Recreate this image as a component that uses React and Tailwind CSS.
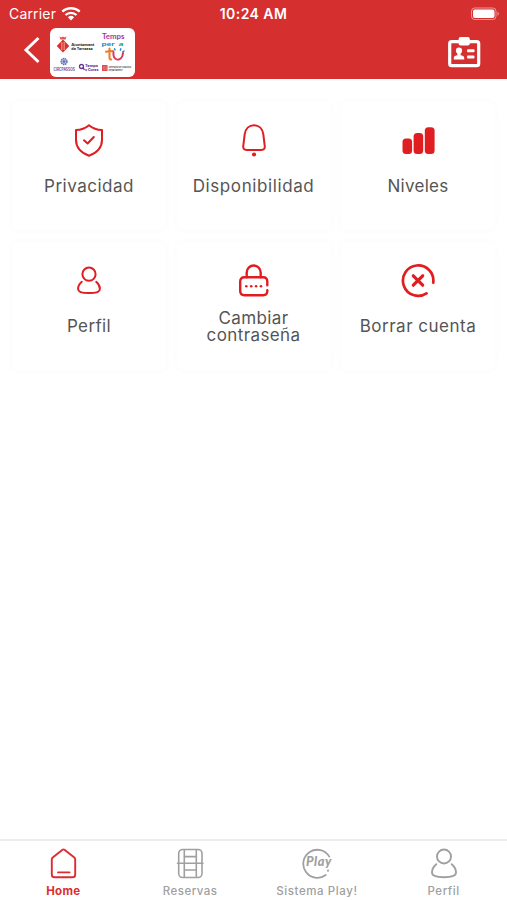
import React from 'react';

const stroke = {
  fill: 'none',
  stroke: 'currentColor',
  strokeWidth: 2,
  strokeLinecap: 'round',
  strokeLinejoin: 'round',
};

const ShieldIcon = () => (
  <svg width="34" height="34" viewBox="0 0 34 34" {...stroke}>
    <path d="M17 1.300c3.600 3.100 8 4.700 13 4.700V15.700c0 7.700-5 13-13 16C9 28.700 4 23.400 4 15.700V6C9 6 13.400 4.400 17 1.300Z" />
    <path d="m12 16.300 3.600 3.200 6.200-6.500" />
  </svg>
);

const BellIcon = () => (
  <svg width="34" height="34" viewBox="0 0 34 34" {...stroke}>
    <path d="M17 1.200c-5 0-8.600 3.600-9.300 9L6.300 21.700c-.4 2.800.8 4.200 3.300 4.200h14.800c2.500 0 3.700-1.400 3.300-4.200l-1.400-11.500c-.7-5.400-4.300-9-9.300-9Z" />
    <circle cx="17" cy="30.500" r="2.100" fill="currentColor" stroke="none" />
  </svg>
);

const LevelsIcon = () => (
  <svg width="34" height="34" viewBox="0 0 34 34" fill="currentColor">
    <rect x="1.500" y="14.500" width="9.600" height="15.500" rx="3.500" />
    <rect x="12.600" y="9" width="9.600" height="21" rx="3.500" />
    <rect x="23.800" y="3.300" width="9.800" height="26.700" rx="3.500" />
  </svg>
);

const PersonIcon = () => (
  <svg width="34" height="34" viewBox="0 0 34 34" {...stroke}>
    <circle cx="17" cy="10.200" r="6.600" />
    <path d="M9.800 17.800c-2.300 1.900-3.700 4.700-3.700 7.100 0 3.100 4.500 4.200 10.900 4.200s10.900-1.100 10.900-4.200c0-2.400-1.400-5.200-3.700-7.100" />
  </svg>
);

const LockIcon = () => (
  <svg width="34" height="34" viewBox="0 0 34 34" {...stroke} strokeWidth="2.400">
    <path d="M9.700 13.300V8.500a7 7 0 0 1 14 0v4.800" />
    <path d="M30.300 21.300v-3.800c0-2.800-1.400-4.200-4.200-4.200H7.400c-2.800 0-4.200 1.400-4.200 4.200v9.600c0 2.800 1.400 4.200 4.200 4.200h18.700c2.800 0 4.200-1.400 4.200-4.200v-.8" />
    <g fill="currentColor" stroke="none">
      <circle cx="9.300" cy="22.200" r="1.300" />
      <circle cx="14.200" cy="22.200" r="1.300" />
      <circle cx="19.100" cy="22.200" r="1.300" />
      <circle cx="24" cy="22.200" r="1.300" />
    </g>
  </svg>
);

const DeleteIcon = () => (
  <svg width="34" height="34" viewBox="0 0 34 34" {...stroke} strokeWidth="2.700">
    <path d="M32.200 18.700A15.200 15.200 0 1 0 25.500 29.300" />
    <path d="m12.300 11.800 9.400 9.400M21.700 11.800l-9.400 9.400" strokeWidth="3.200" />
  </svg>
);

const HomeIcon = () => (
  <svg width="32" height="32" viewBox="0 0 32 32" {...stroke} strokeWidth="1.900">
    <path d="M4.800 12.600c0-1 .3-1.600 1.200-2.300l9.200-7.400c.9-.7 1.700-.7 2.600 0l9.200 7.400c.9.700 1.200 1.300 1.200 2.300v14.800c0 1.900-1 2.900-2.900 2.900H7.700c-1.900 0-2.900-1-2.900-2.900Z" />
    <path d="M11 25.400h11.500" />
  </svg>
);

const CourtIcon = () => (
  <svg width="32" height="32" viewBox="0 0 32 32" {...stroke} strokeWidth="1.600">
    <rect x="4.700" y="2.500" width="23.300" height="28" rx="4" />
    <path d="M10.300 2.800v27.400M22.300 2.800v27.400M10.300 9.600h12M10.300 23h12M3.500 16.300h25.500" />
  </svg>
);

const PlayIcon = () => (
  <svg width="32" height="32" viewBox="0 0 32 32" {...stroke} strokeWidth="1.800">
    <path d="M28.300 9.600A14 14 0 1 0 24.700 28" />
    <text x="5" y="19" fill="currentColor" stroke="none" fontFamily="Lato, sans-serif" fontStyle="italic" fontWeight="900" fontSize="13.500" textLength="26" lengthAdjust="spacingAndGlyphs">Play</text>
    <path d="M27 23.500v.2" strokeWidth="2" />
  </svg>
);

const ProfileTabIcon = () => (
  <svg width="32" height="32" viewBox="0 0 32 32" {...stroke} strokeWidth="1.900">
    <circle cx="16" cy="9.500" r="7" />
    <path d="M8.300 17.200C5.700 19.300 4 22.700 4 25.600c0 3.500 4.900 4.700 12 4.700s12-1.200 12-4.700c0-2.900-1.700-6.300-4.300-8.400" />
  </svg>
);

const BackIcon = () => (
  <svg className="ml-[22px] shrink-0" width="20" height="32" viewBox="0 0 20 32" {...stroke} strokeWidth="3">
    <path d="M16.500 2 4 14l12.500 12" strokeLinecap="butt" strokeLinejoin="miter" />
  </svg>
);

const BadgeIcon = () => (
  <svg width="34" height="32" viewBox="0 0 34 32" fill="none" stroke="white">
    <rect x="2.700" y="5.700" width="29" height="24" rx="2" strokeWidth="3.200" />
    <g fill="white" stroke="none">
      <rect x="11.600" y="1" width="11.200" height="8.500" rx="2" />
      <circle cx="12" cy="14.700" r="3.100" />
      <path d="M6.800 23.500v-1.700c0-1.700 1.800-2.300 3.600-2.500v-3h3.200v3c1.800.2 3.600.8 3.600 2.500v1.700Z" />
      <rect x="20" y="13.300" width="7.500" height="2.900" rx="1" />
      <rect x="20" y="19.500" width="7.500" height="2.900" rx="1" />
    </g>
  </svg>
);

const WifiIcon = () => (
  <svg width="20" height="14" viewBox="0 0 20 14" fill="none" stroke="white" strokeWidth="2.300">
    <path d="M1.300 4.700a12.700 12.700 0 0 1 17.400 0M4.500 8a8 8 0 0 1 11 0" />
    <path d="M6.900 10.300a4.500 4.500 0 0 1 6.200 0L10 13.400Z" fill="white" stroke="none" />
  </svg>
);

const BatteryIcon = () => (
  <svg width="30" height="14" viewBox="0 0 30 14" fill="none">
    <rect x="1.500" y="1" width="24.500" height="11.500" rx="3.200" stroke="white" strokeOpacity=".5" />
    <rect x="3" y="2.500" width="21.500" height="8.500" rx="1.900" fill="white" />
    <path d="M27.500 4.800c1.800.8 1.800 3.200 0 4Z" fill="white" fillOpacity=".5" />
  </svg>
);

const SponsorLogo = () => (
  <svg width="85" height="49" viewBox="0 0 85 49" fontFamily="Inter, sans-serif">
    <path d="m13 11.500 6.300 6.500-6.300 6.500L6.700 18Z" fill="#d9302c" />
    <path d="M9.500 8.200c1.200 1.500 1.800 1.500 3.500.2 1.700 1.300 2.300 1.300 3.500-.2l-.8 3.400h-5.400Z" fill="#e05a4c" />
    <path d="M13 14v8M11.500 14v8M14.500 14v8" stroke="#f5b9ad" strokeWidth=".6" />
    <g fontSize="3.500" fontWeight="800" fill="#333">
      <text x="21.300" y="17.800" textLength="23" lengthAdjust="spacingAndGlyphs">Ajuntament</text>
      <text x="21.300" y="22.400" textLength="21.500" lengthAdjust="spacingAndGlyphs">de Terrassa</text>
    </g>
    <g fontFamily="Lato, sans-serif" fontWeight="700">
      <text x="52" y="10.500" fontSize="7.500" fill="#a33a9b" textLength="22.500" lengthAdjust="spacingAndGlyphs">Temps</text>
      <text x="51.500" y="18" fontSize="6" fontWeight="900" fill="#1b91c8" textLength="13" lengthAdjust="spacingAndGlyphs">per</text>
      <text x="68.500" y="18" fontSize="6" fontWeight="900" fill="#27a58a" textLength="5" lengthAdjust="spacingAndGlyphs">a</text>
    </g>
    <path d="M59.500 20.500v9c0 1.500.5 2.100 1.700 2M56 23.700l7-.7" stroke="#ee7b23" strokeWidth="2" fill="none" strokeLinecap="round" />
    <path d="M63.500 24c-1.500 9.500 9 10.500 9.500 1" stroke="#dd3857" strokeWidth="2" fill="none" strokeLinecap="round" />
    <path d="m64.500 20.800.6 1M70.800 20.800l-.4 1.300M74 23l-1.200.8" stroke="#2383c1" strokeWidth="1.400" strokeLinecap="round" />
    <circle cx="14" cy="33.500" r="3" fill="#b7bde3" stroke="#596cae" strokeWidth="1.300" strokeDasharray="1.500 .6" />
    <circle cx="14" cy="33.500" r="1.200" fill="#596cae" />
    <text x="3.500" y="43" fontSize="4.200" fontWeight="700" fill="#71549e" textLength="21.500" lengthAdjust="spacingAndGlyphs">CIRCPASSOS</text>
    <circle cx="31.500" cy="38.500" r="2" fill="none" stroke="#64388f" strokeWidth="1.300" />
    <path d="m32.500 39.500 2 2.200" stroke="#64388f" strokeWidth="1.300" />
    <g fontSize="3.400" fontWeight="800" fill="#64388f">
      <text x="35" y="39" textLength="13" lengthAdjust="spacingAndGlyphs">Temps</text>
      <text x="35" y="43.300" textLength="13.500" lengthAdjust="spacingAndGlyphs">x Cures</text>
    </g>
    <rect x="52" y="37" width="5.500" height="6" fill="#d9434b" />
    <path d="M53.200 37.700v4.600M54.700 37.700v4.600M56.200 37.700v4.600" stroke="#f3aaa9" strokeWidth=".5" />
    <g fontSize="2.500" fill="#444" fontWeight="600">
      <text x="58.500" y="39.500" textLength="22.500" lengthAdjust="spacingAndGlyphs">Generalitat de Catalunya</text>
      <text x="58.500" y="42.800" textLength="14" lengthAdjust="spacingAndGlyphs">Departament</text>
    </g>
  </svg>
);

const Card = ({ icon, children, tracking }) => (
  <button className="flex h-32 flex-col items-center rounded-md bg-white pt-[22px] text-[#555] shadow-[0_0_10px_rgba(0,0,0,0.025)]">
    <span className="h-[34px] text-[#e01e22]">{icon}</span>
    <span className={`mt-[11px] flex h-[36px] items-center text-center text-[17px] leading-[17.5px] whitespace-nowrap ${tracking}`}>
      <span>{children}</span>
    </span>
  </button>
);

const Tab = ({ icon, label, className }) => (
  <button className={`flex flex-col items-center pt-[6px] leading-[14px] ${className}`}>
    <span className="h-8">{icon}</span>
    <span className="mt-[5px]">{label}</span>
  </button>
);

export default function App() {
  return (
    <div className="flex h-[900px] w-[507px] flex-col overflow-hidden bg-white font-['Inter',sans-serif]">
      <header className="h-[79px] shrink-0 bg-[#d5302f] text-white">
        <div className="grid h-[27px] grid-cols-3 items-center text-[14px] leading-none">
          <div className="flex items-center gap-[5px] pl-[9px] tracking-[0.18px]">
            <span>Carrier</span>
            <WifiIcon />
          </div>
          <span className="mt-px text-center text-[14px] font-semibold tracking-[0.45px]">10:24 AM</span>
          <div className="flex justify-end pr-[7px]"><BatteryIcon /></div>
        </div>
        <div className="flex h-[50px] items-center">
          <BackIcon />
          <div className="ml-2 h-[49px] w-[85px] shrink-0 rounded-[6px] bg-white"><SponsorLogo /></div>
          <div className="mr-[26px] ml-auto"><BadgeIcon /></div>
        </div>
      </header>

      <main className="flex-1 px-3 pt-[23px]">
        <div className="grid grid-cols-3 gap-x-[10.500px] gap-y-3">
          <Card icon={<ShieldIcon />} tracking="tracking-[0.5px]">Privacidad</Card>
          <Card icon={<BellIcon />} tracking="tracking-[0.6px]">Disponibilidad</Card>
          <Card icon={<LevelsIcon />} tracking="tracking-[0.3px]">Niveles</Card>
          <Card icon={<PersonIcon />} tracking="tracking-[0.35px]">Perfil</Card>
          <Card icon={<LockIcon />} tracking="tracking-[0.4px]">Cambiar<br />contraseña</Card>
          <Card icon={<DeleteIcon />} tracking="tracking-[0.5px]">Borrar cuenta</Card>
        </div>
      </main>

      <nav className="grid h-[61px] shrink-0 grid-cols-4 border-t-2 border-[#ececec] bg-white">
        <Tab icon={<HomeIcon />} label="Home" className="text-[11.500px] font-bold tracking-[0.35px] text-[#dc2c30]" />
        <Tab icon={<CourtIcon />} label="Reservas" className="text-[11.500px] font-medium tracking-[0.5px] text-[#a0a0a0]" />
        <Tab icon={<PlayIcon />} label="Sistema Play!" className="text-[11.500px] font-medium tracking-[0.6px] text-[#a0a0a0]" />
        <Tab icon={<ProfileTabIcon />} label="Perfil" className="text-[11.500px] font-medium tracking-[0.55px] text-[#a0a0a0]" />
      </nav>
    </div>
  );
}
